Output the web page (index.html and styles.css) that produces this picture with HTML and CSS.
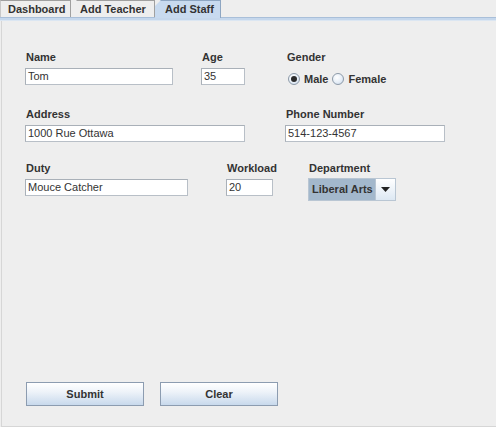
FILE: index.html
```html
<!DOCTYPE html>
<html>
<head>
<meta charset="utf-8">
<link rel="stylesheet" href="styles.css">
</head>
<body>
<div class="window">
  <div class="tabs">
    <div class="tab">Dashboard</div>
    <div class="tab">Add Teacher</div>
    <div class="tab selected">Add Staff</div>
  </div>
  <div class="tabline"></div>
  <div class="panel">
    <div class="row row1">
      <div class="field f-name"><div class="label">Name</div><div class="input w-name">Tom</div></div>
      <div class="field f-age"><div class="label">Age</div><div class="input w-age">35</div></div>
      <div class="field f-gender"><div class="label">Gender</div>
        <div class="radios">
          <span class="radio on"></span><span class="rlabel">Male</span>
          <span class="radio"></span><span class="rlabel">Female</span>
        </div>
      </div>
    </div>
    <div class="row row2">
      <div class="field f-address"><div class="label">Address</div><div class="input w-address">1000 Rue Ottawa</div></div>
      <div class="field f-phone"><div class="label">Phone Number</div><div class="input w-phone">514-123-4567</div></div>
    </div>
    <div class="row row3">
      <div class="field f-duty"><div class="label">Duty</div><div class="input w-duty">Mouce Catcher</div></div>
      <div class="field f-work"><div class="label">Workload</div><div class="input w-work">20</div></div>
      <div class="field f-dept"><div class="label">Department</div>
        <div class="combo"><span class="combo-text">Liberal Arts</span><span class="combo-btn"><svg width="9" height="5" viewBox="0 0 9 5"><path d="M0 0H9L4.5 5Z" fill="#222"/></svg></span></div>
      </div>
    </div>
    <div class="spacer"></div>
    <div class="buttons">
      <div class="button">Submit</div>
      <div class="button">Clear</div>
    </div>
  </div>
</div>
</body>
</html>
```
FILE: styles.css
```css
html, body {
  margin: 0;
  padding: 0;
  background: #eeeeee;
}
body {
  font-family: "Liberation Sans", Arial, sans-serif;
  font-size: 11px;
  color: #333333;
  width: 496px;
  height: 427px;
  overflow: hidden;
}
.window {
  display: flex;
  flex-direction: column;
  height: 427px;
}
.tabs {
  display: flex;
  height: 17px;
  align-items: flex-end;
}
.tab {
  box-sizing: border-box;
  height: 17px;
  padding: 0;
  line-height: 17px;
  white-space: nowrap;
  font-weight: bold;
  font-size: 11px;
  color: #333;
  border: 1px solid #a0a0a0;
  border-bottom: none;
  border-left: none;
  background: #eeeeee;
}
.tab:first-child {
  width: 71px;
  padding-left: 7px;
  border-left: 1px solid #c8c8c8;
}
.tab:nth-child(2) {
  width: 84px;
  padding-left: 9px;
  clip-path: polygon(6px 0, 100% 0, 100% 100%, 0 100%, 0 6px);
}
.tab.selected {
  width: 66px;
  padding-left: 10px;
  background: #c8daef;
  border-color: #8ea6c2;
  clip-path: polygon(6px 0, 100% 0, 100% 100%, 0 100%, 0 6px);
  height: 18px;
  margin-bottom: -1px;
}
.tabline {
  height: 2px;
  background: #c5d7ec;
  border-top: 1px solid #a9bfd9;
  border-bottom: 1px solid #dbe6f2;
}
.panel {
  flex: 1;
  display: flex;
  flex-direction: column;
  border-left: 1px solid #d6d6d6;
  border-bottom: 1px solid #d6d6d6;
  margin-left: 1px;
  padding: 29px 0 0 23px;
}
.row {
  display: flex;
  align-items: flex-start;
}
.row2 { margin-top: 20px; }
.row3 { margin-top: 19px; }
.field {
  display: flex;
  flex-direction: column;
}
.label {
  font-weight: bold;
  font-size: 11px;
  height: 14px;
  line-height: 14px;
  padding-left: 1px;
  margin-bottom: 4px;
}
.input {
  box-sizing: border-box;
  height: 17px;
  line-height: 15px;
  padding-left: 2px;
  background: #ffffff;
  border: 1px solid #b8bfc7;
  border-top-color: #a9b0b8;
  border-left-color: #a9b0b8;
  color: #333;
  font-size: 11px;
}
.f-name { width: 176px; }
.w-name { width: 148px; }
.f-age { width: 85px; }
.w-age { width: 44px; }
.f-gender { width: 120px; }
.f-address { width: 260px; }
.w-address { width: 220px; }
.f-phone { width: 170px; }
.w-phone { width: 160px; }
.f-duty { width: 201px; }
.w-duty { width: 163px; }
.f-work { width: 82px; }
.w-work { width: 47px; }
.f-dept { width: 100px; }
.radios {
  display: flex;
  align-items: center;
  height: 17px;
  padding-top: 2px;
  padding-left: 2px;
  font-weight: bold;
}
.radio {
  box-sizing: border-box;
  width: 12px;
  height: 12px;
  border-radius: 50%;
  border: 1px solid #8d9aa8;
  background: radial-gradient(circle at 40% 35%, #ffffff 0%, #e6eef7 55%, #c3d3e6 100%);
  position: relative;
  margin-right: 4px;
}
.radio.on::after {
  content: "";
  position: absolute;
  left: 2px;
  top: 2px;
  width: 6px;
  height: 6px;
  border-radius: 50%;
  background: #2b2b2b;
}
.rlabel {
  margin-right: 4px;
}
.combo {
  display: flex;
  width: 88px;
  height: 23px;
  box-sizing: border-box;
  border: 1px solid #b9c6d3;
  margin-top: -1px;
}
.combo-text {
  flex: 1;
  background: #a3b8cc;
  font-weight: bold;
  line-height: 21px;
  padding-left: 3px;
  color: #333;
}
.combo-btn {
  width: 19px;
  display: flex;
  align-items: center;
  justify-content: center;
  background: linear-gradient(#ffffff, #dde8f3);
  border-left: 1px solid #b9c6d3;
}
.spacer { flex: 1; }
.buttons {
  display: flex;
  gap: 16px;
  padding-left: 1px;
  margin-bottom: 20px;
}
.button {
  box-sizing: border-box;
  width: 118px;
  height: 24px;
  line-height: 22px;
  text-align: center;
  font-weight: bold;
  color: #333;
  border: 1px solid #8c9cb0;
  background: linear-gradient(#ffffff 0%, #eef3f9 40%, #c8d9ec 100%);
}
```
